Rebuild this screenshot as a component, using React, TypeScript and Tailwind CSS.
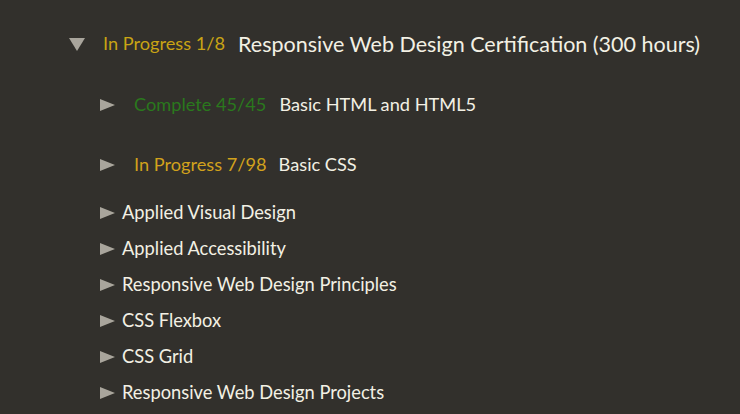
const font = { fontFamily: 'Lato, "Open Sans", sans-serif' }

function Tri({ down = false }: { down?: boolean }) {
  return down ? (
    <svg width="16" height="13" viewBox="0 0 16 13" className="shrink-0">
      <polygon points="0,0 16,0 8,13" fill="#a9a59c" />
    </svg>
  ) : (
    <svg width="15" height="12" viewBox="0 0 15 12" className="shrink-0">
      <polygon points="0,0 15,6 0,12" fill="#a9a59c" />
    </svg>
  )
}

const sections = [
  'Applied Visual Design',
  'Applied Accessibility',
  'Responsive Web Design Principles',
  'CSS Flexbox',
  'CSS Grid',
  'Responsive Web Design Projects',
]

export default function App() {
  return (
    <div className="w-[740px] h-[414px] overflow-hidden bg-[#32302c] text-[#f3f0e4]" style={font}>
      <div className="flex items-center pl-[69px] pt-[31px] h-[26px] box-content">
        <Tri down />
        <span className="ml-[18px] text-[18.2px] text-[#c9a414]">In Progress 1/8</span>
        <span className="ml-[13px] text-[21.5px]">Responsive Web Design Certification (300 hours)</span>
      </div>

      <div className="flex items-center pl-[100px] mt-[35px] h-[26px]">
        <Tri />
        <span className="ml-[19px] text-[18.2px] text-[#2a781d]">Complete 45/45</span>
        <span className="ml-[13px] text-[18.2px]">Basic HTML and HTML5</span>
      </div>

      <div className="flex items-center pl-[100px] mt-[34px] h-[26px]">
        <Tri />
        <span className="ml-[19px] text-[18.2px] text-[#d2a21c]">In Progress 7/98</span>
        <span className="ml-[12px] text-[18.2px]">Basic CSS</span>
      </div>

      <ul className="mt-[22px] pl-[100px] flex flex-col gap-[10px]">
        {sections.map(s => (
          <li key={s} className="flex items-center h-[26px]">
            <Tri />
            <span className="ml-[7px] text-[18.3px]">{s}</span>
          </li>
        ))}
      </ul>
    </div>
  )
}
